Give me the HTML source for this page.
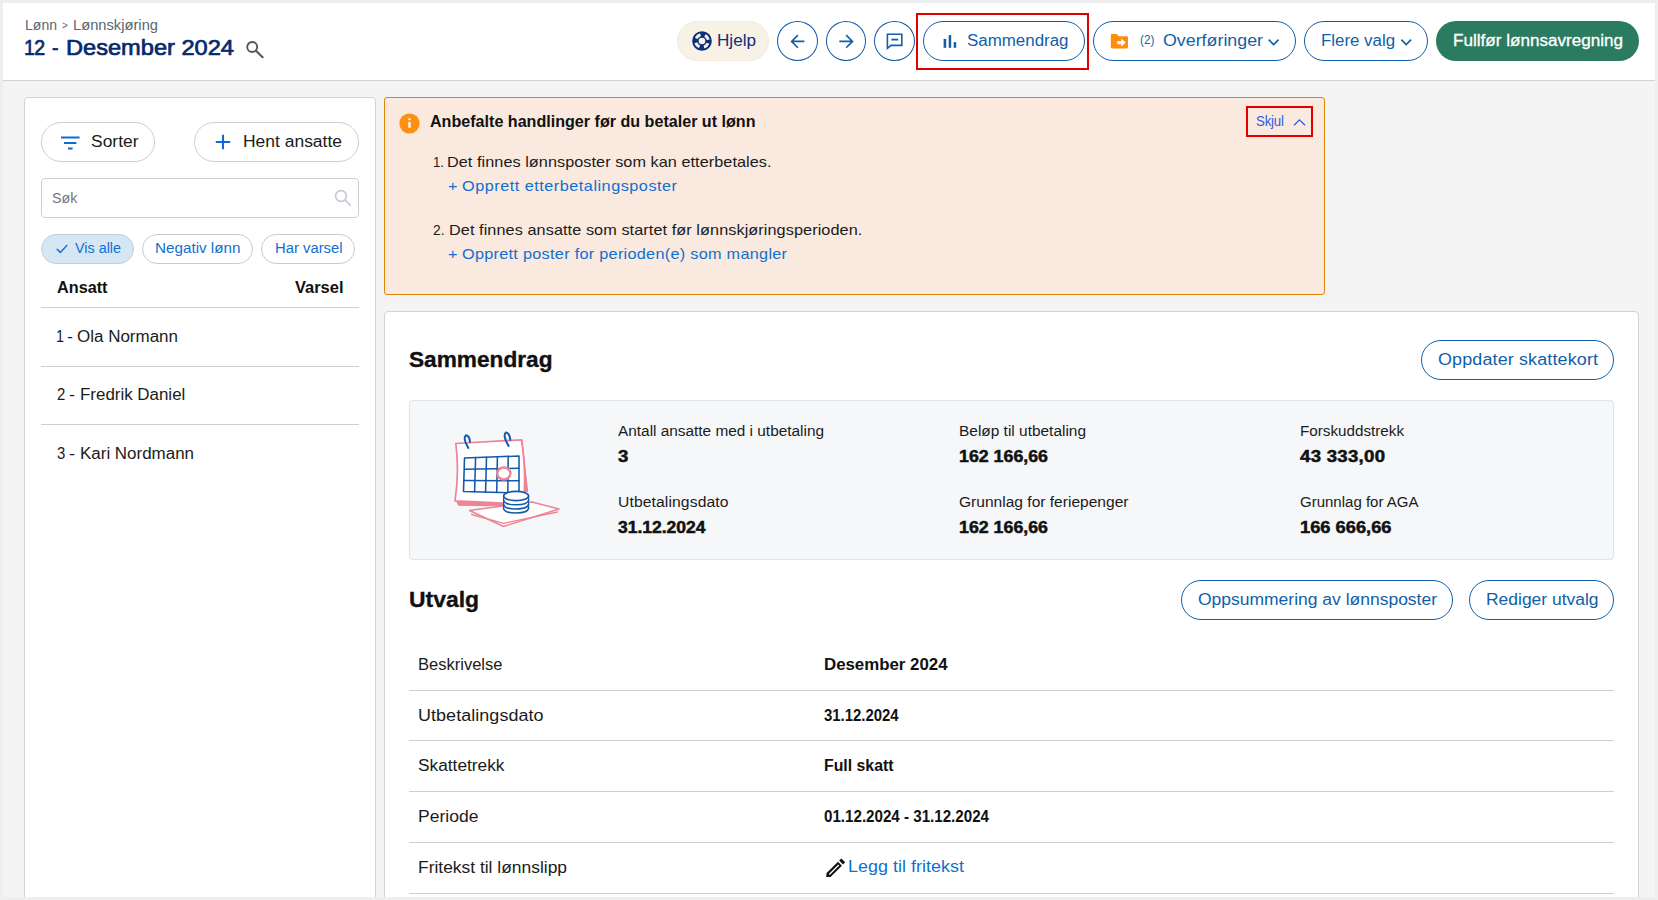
<!DOCTYPE html>
<html lang="no">
<head>
<meta charset="utf-8">
<title>Lønnskjøring - 12 - Desember 2024</title>
<style>
*{box-sizing:border-box;margin:0;padding:0}
html,body{width:1658px;height:900px;overflow:hidden;background:#eeeeee}
body{font-family:"Liberation Sans",sans-serif}
#page{position:relative;width:1658px;height:900px;overflow:hidden;background:#eeeeee}
.abs{position:absolute}
.t{position:absolute;white-space:nowrap;line-height:24px;height:24px;transform-origin:0 50%}
#bg{left:3px;top:3px;width:1652px;height:894px;background:#f4f4f4}
#hdr{left:3px;top:3px;width:1652px;height:78px;background:#fff;border-bottom:1px solid #d2d2d2}
.gpill{position:absolute;border:1px solid #cfcfcf;border-radius:20px;background:#fff;height:40px}
.chip{position:absolute;border:1px solid #cacaca;border-radius:15px;background:#fff;height:30px;top:234px}
.card{position:absolute;background:#fff;border:1px solid #d3d3d3;border-radius:4px}
.hl{position:absolute;height:1px;background:#cfcfcf}
svg{position:absolute;overflow:visible}
#frame{left:0;top:0;width:1658px;height:900px;border:3px solid #eeeeee;z-index:10}

</style>
</head>
<body>
<div id="page">
<div class="abs" id="bg"></div>
<div class="abs" id="hdr"></div>

<!-- header: search icon -->
<svg style="left:244.8px;top:39.2px" width="20" height="20" viewBox="0 0 20 20"><circle cx="7.2" cy="8" r="5" fill="none" stroke="#5d5852" stroke-width="1.9"/><path d="M11 11.8 L17.6 18.2" stroke="#5d5852" stroke-width="2.2" stroke-linecap="round"/></svg>

<!-- Hjelp -->
<div class="abs" style="left:677px;top:21px;width:92px;height:40px;border-radius:20px;background:#f8f1e6;border:1px solid #f6e9dc"></div>
<svg style="left:691.5px;top:31px" width="20" height="20" viewBox="0 0 20 20"><circle cx="10" cy="10" r="9.8" fill="#0b2f7a"/><circle cx="10" cy="10" r="3.3" fill="#f8f1e6"/><circle cx="10" cy="10" r="6.4" fill="none" stroke="#f8f1e6" stroke-width="3" stroke-dasharray="5.4 4.653" stroke-dashoffset="-2.33"/></svg>

<!-- circle buttons -->
<div class="abs" style="left:777.0px;top:21.0px;width:41.0px;height:40.0px;border:1px solid #0f5ca8;border-radius:50%;background:#fff"></div>
<svg style="left:787px;top:31px" width="20" height="20" viewBox="0 0 20 20" fill="none" stroke="#125fa6" stroke-width="1.6" stroke-linecap="butt" stroke-linejoin="miter"><path d="M17.3 10.4 H4.9 M10.9 4.1 L4.6 10.4 L10.9 16.7"/></svg>
<div class="abs" style="left:825.7px;top:21.0px;width:40.6px;height:40.0px;border:1px solid #0f5ca8;border-radius:50%;background:#fff"></div>
<svg style="left:836px;top:31px" width="20" height="20" viewBox="0 0 20 20" fill="none" stroke="#125fa6" stroke-width="1.6" stroke-linecap="butt" stroke-linejoin="miter"><path d="M3.3 10.4 H16.2 M10.2 4.1 L16.5 10.4 L10.2 16.7"/></svg>
<div class="abs" style="left:874.0px;top:21.0px;width:40.6px;height:40.0px;border:1px solid #0f5ca8;border-radius:50%;background:#fff"></div>
<svg style="left:884px;top:31px" width="20" height="20" viewBox="0 0 20 20" fill="none" stroke="#125fa6" stroke-width="1.6" stroke-linejoin="miter"><path d="M3.4 3.3 H17.8 V14.4 H7 L3.4 17.4 Z"/><path d="M7.4 8.6 H14.2" stroke-width="1.8"/></svg>

<!-- Sammendrag -->
<div class="abs" style="left:916.0px;top:13.0px;width:173.0px;height:57.0px;border:2px solid #e10000"></div>
<div class="abs" style="left:923.0px;top:21.0px;width:162.0px;height:40.0px;border:1px solid #0f5ca8;border-radius:20.0px;background:#fff"></div>
<svg style="left:943px;top:33px" width="14" height="15" viewBox="0 0 14 15"><rect x="0.6" y="5.9" width="2.6" height="8.9" fill="#125fa6"/><rect x="5.7" y="2.1" width="2.5" height="12.7" fill="#125fa6"/><rect x="10.7" y="9.1" width="2.5" height="5.7" fill="#125fa6"/></svg>

<!-- Overforinger -->
<div class="abs" style="left:1093.0px;top:21.0px;width:202.5px;height:40.0px;border:1px solid #0f5ca8;border-radius:20.0px;background:#fff"></div>
<svg style="left:1110px;top:33px" width="19" height="16" viewBox="0 0 19 16"><path d="M1.8 1 H6.6 L8.6 3.2 H16.6 Q18 3.2 18 4.6 V14 Q18 15.4 16.6 15.4 H2.2 Q0.8 15.4 0.8 14 V2.2 Q0.8 1 1.8 1 Z" fill="#ff8d0c"/><path d="M7.3 7.9 H11.3 V5.4 L15.6 9.6 L11.3 13.8 V11.3 H7.3 Z" fill="#fff"/></svg>
<svg style="left:1268px;top:37.5px" width="12" height="8" viewBox="0 0 12 8" fill="none" stroke="#125fa6" stroke-width="1.7" stroke-linecap="butt" stroke-linejoin="miter"><path d="M0.7 1.7 L5.65 6.5 L10.6 1.7"/></svg>

<!-- Flere valg -->
<div class="abs" style="left:1304.0px;top:21.0px;width:124.0px;height:40.0px;border:1px solid #0f5ca8;border-radius:20.0px;background:#fff"></div>
<svg style="left:1400px;top:37.5px" width="12" height="8" viewBox="0 0 12 8" fill="none" stroke="#125fa6" stroke-width="1.7" stroke-linecap="butt" stroke-linejoin="miter"><path d="M1.3 1.7 L6.2 6.5 L11.1 1.7"/></svg>

<!-- green -->
<div class="abs" style="left:1436px;top:21px;width:203px;height:40px;border-radius:20px;background:#2a7b5f"></div>

<!-- LEFT PANEL -->
<div class="card" style="left:24px;top:97px;width:351.5px;height:820px"></div>
<div class="gpill" style="left:41px;top:122px;width:114px"></div>
<svg style="left:60px;top:136px" width="20" height="14" viewBox="0 0 20 14" stroke="#1169d3" stroke-width="2.2" stroke-linecap="butt"><path d="M1 1.5 H19.6 M4 7 H16.4 M8 12.5 H12.6"/></svg>
<div class="gpill" style="left:194px;top:122px;width:165px"></div>
<svg style="left:215px;top:134px" width="16" height="16" viewBox="0 0 16 16" stroke="#1169d3" stroke-width="2.1"><path d="M8 0.8 V15.2 M0.8 8 H15.2"/></svg>
<div class="abs" style="left:41px;top:178px;width:318px;height:40px;border:1px solid #cfcfcf;border-radius:4px;background:#fff"></div>
<svg style="left:334px;top:189px" width="18" height="18" viewBox="0 0 18 18" fill="none" stroke="#c3cad2" stroke-width="1.6" stroke-linecap="round"><circle cx="7" cy="7" r="5.4"/><path d="M11.2 11.2 L16.2 16.2"/></svg>
<div class="chip" style="left:41px;width:92.5px;background:#d5e7f4;border-color:#bfd0dc"></div>
<svg style="left:56px;top:243.8px" width="12" height="10" viewBox="0 0 12 10" fill="none" stroke="#1a73cf" stroke-width="1.5" stroke-linecap="round" stroke-linejoin="round"><path d="M1.2 5.4 L4.3 8.4 L10.8 1.4"/></svg>
<div class="chip" style="left:142px;width:110.5px"></div>
<div class="chip" style="left:261px;width:94px"></div>
<div class="hl" style="left:41px;top:307px;width:318px"></div>
<div class="hl" style="left:41px;top:366px;width:318px"></div>
<div class="hl" style="left:41px;top:424px;width:318px"></div>

<!-- ALERT -->
<div class="abs" style="left:384px;top:97px;width:941px;height:198px;background:#f9e9de;border:1px solid #e18505;border-radius:3px"></div>
<svg style="left:399px;top:112.6px" width="21" height="21" viewBox="0 0 21 21"><circle cx="10.5" cy="10.5" r="10.1" fill="#fd9013"/><rect x="9.35" y="9" width="2.3" height="5.7" fill="#fff"/><rect x="9.35" y="5.3" width="2.3" height="1.9" fill="#fff"/></svg>
<div class="abs" style="left:1246.0px;top:106.0px;width:67.0px;height:31.0px;border:2px solid #e10000"></div>
<svg style="left:1292.5px;top:118px" width="13" height="8" viewBox="0 0 13 8" fill="none" stroke="#2f5ce0" stroke-width="1.3" stroke-linecap="butt" stroke-linejoin="miter"><path d="M1 7.2 L6.5 1.8 L12 7.2"/></svg>

<!-- MAIN CARD -->
<div class="card" style="left:384px;top:311px;width:1255px;height:620px"></div>
<div class="abs" style="left:1421.0px;top:340.0px;width:193.0px;height:40.0px;border:1px solid #0f5ca8;border-radius:20.0px;background:#fff"></div>
<div class="abs" style="left:409px;top:400px;width:1205px;height:160px;background:#f5f7f9;border:1px solid #dfe3e7;border-radius:4px"></div>

<!-- illustration -->
<svg style="left:440px;top:420px" width="140" height="120" viewBox="0 0 140 120">
 <g fill="none" stroke-linejoin="round" stroke-linecap="round">
  <path d="M29.5 90.5 L92 82 L119 89 L63.5 106.5 Z" fill="#fff" stroke="#ee8496" stroke-width="1.5"/>
  <path d="M31.5 94.5 L63.7 103.3 L117.5 92" stroke="#ee8496" stroke-width="1.3"/>
  <path d="M17 81.5 L18.5 85.2 L63 86 L63 82.5 Z" fill="#ee8496" stroke="#ee8496" stroke-width="1.2"/>
  <path d="M82 20 L87.6 71.5 L83 72.5 Z" fill="#ee8496" stroke="#ee8496" stroke-width="1.2"/>
  <path d="M15.8 23.5 L81.5 19.8 Q86 50 84 76 L63 83 L15 80.8 Q19.5 52 15.8 23.5 Z" fill="#fff" stroke="#ee8496" stroke-width="1.7"/>
  <g stroke="#1458ac" stroke-width="1.55">
   <path d="M24.5 38 L79 36 L79 73 L23.5 71.5 Z"/>
   <path d="M24.8 49.3 L79 48.3 M24.2 60.5 L79 60.8"/>
   <path d="M35.6 37.6 L34.6 71.8 M46.5 37.2 L45.6 72.1 M57.4 36.8 L56.7 72.4 M68.2 36.4 L67.8 72.7"/>
  </g>
  <path d="M26 15.3 Q29.6 16 30 22 M26 15.3 Q22.3 17.5 28.3 28" stroke="#1458ac" stroke-width="2"/>
  <path d="M66 12.6 Q69.6 13.2 70.3 19.8 M66 12.6 Q62.3 15 68.6 26" stroke="#1458ac" stroke-width="2"/>
  <ellipse cx="63.8" cy="53.5" rx="6.6" ry="6" fill="#fff" stroke="#ee8496" stroke-width="2.4"/>
  <g stroke="#1458ac" stroke-width="1.6">
   <path d="M63.6 76 V88 Q63.6 93 76 93 Q88.6 93 88.6 88 V76 Z" fill="#fff" stroke="none"/>
   <path d="M63.6 80 Q64 84.8 76 84.8 Q88 84.8 88.6 80 M63.6 84.2 Q64 89 76 89 Q88 89 88.6 84.2 M63.6 88.2 Q64 93 76 93 Q88 93 88.6 88.2"/>
   <path d="M63.6 76 V88.2 M88.6 76 V88.2" stroke-width="1.1"/>
   <ellipse cx="76.1" cy="76" rx="12.5" ry="4.6" fill="#fff"/>
  </g>
 </g>
</svg>

<!-- Utvalg -->
<div class="abs" style="left:1181.0px;top:580.0px;width:272.0px;height:40.0px;border:1px solid #0f5ca8;border-radius:20.0px;background:#fff"></div>
<div class="abs" style="left:1469.0px;top:580.0px;width:145.0px;height:40.0px;border:1px solid #0f5ca8;border-radius:20.0px;background:#fff"></div>
<div class="hl" style="left:409px;top:690px;width:1205px"></div>
<div class="hl" style="left:409px;top:740px;width:1205px"></div>
<div class="hl" style="left:409px;top:791px;width:1205px"></div>
<div class="hl" style="left:409px;top:842px;width:1205px"></div>
<div class="hl" style="left:409px;top:893px;width:1205px"></div>
<svg style="left:825px;top:857px" width="21" height="21" viewBox="0 0 21 21"><path d="M1.1 19.9 L1.6 16.1 L13 4.8 L16.9 8.7 L5.5 20 Z" fill="#111"/><path d="M4.3 17.5 L13.8 8" stroke="#fff" stroke-width="1.3"/><path d="M14.2 3.6 L16.3 1.5 L20.2 5.3 L18 7.5 Z" fill="#111"/></svg>

<span class="t" style="left:24.5px;top:12.5px;font-size:14px;color:#5a6670;transform:scaleX(1.0024);">Lønn</span>
<span class="t" style="left:61.5px;top:13.3px;font-size:11px;color:#5a6670;transform:scaleX(0.9000);">&gt;</span>
<span class="t" style="left:72.5px;top:12.5px;font-size:14px;color:#5a6670;transform:scaleX(1.0504);">Lønnskjøring</span>
<span class="t" style="left:24px;top:36.3px;font-size:21.7px;color:#062a6e;transform:scaleX(0.9000);letter-spacing:-0.792px;-webkit-text-stroke:0.7px #062a6e;">12</span>
<span class="t" style="left:52px;top:36.3px;font-size:21.7px;color:#062a6e;transform:scaleX(0.9000);-webkit-text-stroke:0.7px #062a6e;">-</span>
<span class="t" style="left:66px;top:36.3px;font-size:21.7px;color:#062a6e;transform:scaleX(1.0887);-webkit-text-stroke:0.7px #062a6e;">Desember 2024</span>
<span class="t" style="left:716.5px;top:28.9px;font-size:16px;color:#0b2f7a;transform:scaleX(1.0694);">Hjelp</span>
<span class="t" style="left:967px;top:28.9px;font-size:16px;color:#115fa8;transform:scaleX(1.0568);">Sammendrag</span>
<span class="t" style="left:1139.6px;top:28.3px;font-size:13px;color:#115fa8;transform:scaleX(0.9062);">(2)</span>
<span class="t" style="left:1163px;top:28.9px;font-size:16px;color:#115fa8;transform:scaleX(1.1136);">Overføringer</span>
<span class="t" style="left:1321px;top:28.9px;font-size:16px;color:#115fa8;transform:scaleX(1.0534);">Flere valg</span>
<span class="t" style="left:1453px;top:28.9px;font-size:16px;color:#ffffff;transform:scaleX(1.0680);-webkit-text-stroke:0.3px #ffffff;">Fullfør lønnsavregning</span>
<span class="t" style="left:90.5px;top:129.6px;font-size:16px;color:#1b1b1b;transform:scaleX(1.0900);">Sorter</span>
<span class="t" style="left:243px;top:129.6px;font-size:16px;color:#1b1b1b;transform:scaleX(1.0911);">Hent ansatte</span>
<span class="t" style="left:51.5px;top:186.0px;font-size:14px;color:#777777;transform:scaleX(1.0245);">Søk</span>
<span class="t" style="left:74.5px;top:235.9px;font-size:14px;color:#1070d0;transform:scaleX(1.0247);">Vis alle</span>
<span class="t" style="left:155px;top:235.9px;font-size:14px;color:#1070d0;transform:scaleX(1.0879);">Negativ lønn</span>
<span class="t" style="left:274.5px;top:235.9px;font-size:14px;color:#1070d0;transform:scaleX(1.0580);">Har varsel</span>
<span class="t" style="left:57px;top:275.5px;font-size:16px;color:#111;transform:scaleX(1.0144);font-weight:700;">Ansatt</span>
<span class="t" style="left:294.5px;top:275.5px;font-size:16px;color:#111;transform:scaleX(1.0285);font-weight:700;">Varsel</span>
<span class="t" style="left:56px;top:324.8px;font-size:16px;color:#1b1b1b;transform:scaleX(0.9000);">1</span>
<span class="t" style="left:66.9px;top:324.8px;font-size:16px;color:#1b1b1b;transform:scaleX(1.1200);">-</span>
<span class="t" style="left:77px;top:324.8px;font-size:16px;color:#1b1b1b;transform:scaleX(1.0614);">Ola Normann</span>
<span class="t" style="left:57px;top:382.8px;font-size:16px;color:#1b1b1b;transform:scaleX(0.9319);">2</span>
<span class="t" style="left:69.4px;top:382.8px;font-size:16px;color:#1b1b1b;transform:scaleX(1.1200);">-</span>
<span class="t" style="left:80px;top:382.8px;font-size:16px;color:#1b1b1b;transform:scaleX(1.0573);">Fredrik Daniel</span>
<span class="t" style="left:57px;top:441.9px;font-size:16px;color:#1b1b1b;transform:scaleX(0.9319);">3</span>
<span class="t" style="left:69.4px;top:441.9px;font-size:16px;color:#1b1b1b;transform:scaleX(1.1200);">-</span>
<span class="t" style="left:80px;top:441.9px;font-size:16px;color:#1b1b1b;transform:scaleX(1.0594);">Kari Nordmann</span>
<span class="t" style="left:430px;top:109.5px;font-size:16px;color:#111;transform:scaleX(1.0060);font-weight:700;">Anbefalte handlinger før du betaler ut lønn</span>
<span class="t" style="left:432.6px;top:149.9px;font-size:14.5px;color:#1b1b1b;transform:scaleX(0.9096);">1.</span>
<span class="t" style="left:446.8px;top:149.9px;font-size:14.5px;color:#1b1b1b;transform:scaleX(1.1200);letter-spacing:0.046px;">Det finnes lønnsposter som kan etterbetales.</span>
<span class="t" style="left:448.3px;top:173.6px;font-size:14.5px;color:#1070d0;transform:scaleX(1.1200);">+</span>
<span class="t" style="left:462px;top:173.6px;font-size:14.5px;color:#1070d0;transform:scaleX(1.1200);letter-spacing:0.452px;">Opprett etterbetalingsposter</span>
<span class="t" style="left:433px;top:217.9px;font-size:14.5px;color:#1b1b1b;transform:scaleX(0.9509);">2.</span>
<span class="t" style="left:449.2px;top:217.9px;font-size:14.5px;color:#1b1b1b;transform:scaleX(1.1200);letter-spacing:0.070px;">Det finnes ansatte som startet før lønnskjøringsperioden.</span>
<span class="t" style="left:448.3px;top:241.6px;font-size:14.5px;color:#1070d0;transform:scaleX(1.1200);">+</span>
<span class="t" style="left:462px;top:241.6px;font-size:14.5px;color:#1070d0;transform:scaleX(1.1200);letter-spacing:0.257px;">Opprett poster for perioden(e) som mangler</span>
<span class="t" style="left:1255.7px;top:108.8px;font-size:14.7px;color:#2f5ce0;transform:scaleX(0.9000);letter-spacing:-0.183px;">Skjul</span>
<span class="t" style="left:409px;top:347.6px;font-size:21.8px;color:#111;transform:scaleX(1.0391);font-weight:700;-webkit-text-stroke:0.35px #111;">Sammendrag</span>
<span class="t" style="left:1438px;top:347.5px;font-size:16px;color:#115fa8;transform:scaleX(1.1200);letter-spacing:0.130px;">Oppdater skattekort</span>
<span class="t" style="left:618px;top:419.0px;font-size:14px;color:#1b1b1b;transform:scaleX(1.0982);">Antall ansatte med i utbetaling</span>
<span class="t" style="left:618px;top:444.8px;font-size:16.6px;color:#111;transform:scaleX(1.1200);font-weight:700;-webkit-text-stroke:0.5px #111;">3</span>
<span class="t" style="left:618px;top:489.5px;font-size:14px;color:#1b1b1b;transform:scaleX(1.1200);letter-spacing:0.097px;">Utbetalingsdato</span>
<span class="t" style="left:618px;top:515.9px;font-size:16.6px;color:#111;transform:scaleX(1.0534);font-weight:700;-webkit-text-stroke:0.5px #111;">31.12.2024</span>
<span class="t" style="left:959px;top:419.0px;font-size:14px;color:#1b1b1b;transform:scaleX(1.1026);">Beløp til utbetaling</span>
<span class="t" style="left:959px;top:444.8px;font-size:16.6px;color:#111;transform:scaleX(1.0715);font-weight:700;-webkit-text-stroke:0.5px #111;">162 166,66</span>
<span class="t" style="left:959px;top:489.5px;font-size:14px;color:#1b1b1b;transform:scaleX(1.1111);">Grunnlag for feriepenger</span>
<span class="t" style="left:959px;top:515.9px;font-size:16.6px;color:#111;transform:scaleX(1.0715);font-weight:700;-webkit-text-stroke:0.5px #111;">162 166,66</span>
<span class="t" style="left:1299.5px;top:419.0px;font-size:14px;color:#1b1b1b;transform:scaleX(1.0867);">Forskuddstrekk</span>
<span class="t" style="left:1299.5px;top:444.8px;font-size:16.6px;color:#111;transform:scaleX(1.1200);letter-spacing:0.258px;font-weight:700;-webkit-text-stroke:0.5px #111;">43 333,00</span>
<span class="t" style="left:1299.5px;top:489.5px;font-size:14px;color:#1b1b1b;transform:scaleX(1.0722);">Grunnlag for AGA</span>
<span class="t" style="left:1299.5px;top:515.9px;font-size:16.6px;color:#111;transform:scaleX(1.1016);font-weight:700;-webkit-text-stroke:0.5px #111;">166 666,66</span>
<span class="t" style="left:409px;top:587.5px;font-size:21.8px;color:#111;transform:scaleX(1.0507);font-weight:700;-webkit-text-stroke:0.35px #111;">Utvalg</span>
<span class="t" style="left:1198px;top:587.5px;font-size:16px;color:#115fa8;transform:scaleX(1.0925);">Oppsummering av lønnsposter</span>
<span class="t" style="left:1485.5px;top:587.5px;font-size:16px;color:#115fa8;transform:scaleX(1.0904);">Rediger utvalg</span>
<span class="t" style="left:417.5px;top:652.7px;font-size:16px;color:#1b1b1b;transform:scaleX(1.0328);">Beskrivelse</span>
<span class="t" style="left:824px;top:652.7px;font-size:16px;color:#111;transform:scaleX(1.0518);font-weight:700;">Desember 2024</span>
<span class="t" style="left:417.5px;top:703.6px;font-size:16px;color:#1b1b1b;transform:scaleX(1.1200);letter-spacing:0.062px;">Utbetalingsdato</span>
<span class="t" style="left:824px;top:703.6px;font-size:16px;color:#111;transform:scaleX(0.9303);font-weight:700;">31.12.2024</span>
<span class="t" style="left:417.5px;top:753.5px;font-size:16px;color:#1b1b1b;transform:scaleX(1.0808);">Skattetrekk</span>
<span class="t" style="left:824px;top:753.5px;font-size:16px;color:#111;transform:scaleX(0.9895);font-weight:700;">Full skatt</span>
<span class="t" style="left:417.5px;top:804.9px;font-size:16px;color:#1b1b1b;transform:scaleX(1.0969);">Periode</span>
<span class="t" style="left:824px;top:804.9px;font-size:16px;color:#111;transform:scaleX(0.9462);font-weight:700;">01.12.2024 - 31.12.2024</span>
<span class="t" style="left:417.5px;top:855.8px;font-size:16px;color:#1b1b1b;transform:scaleX(1.0882);">Fritekst til lønnslipp</span>
<span class="t" style="left:848px;top:854.8px;font-size:16px;color:#1070d0;transform:scaleX(1.1200);letter-spacing:0.026px;">Legg til fritekst</span>
<div class="abs" id="frame"></div>
</div>
</body>
</html>
